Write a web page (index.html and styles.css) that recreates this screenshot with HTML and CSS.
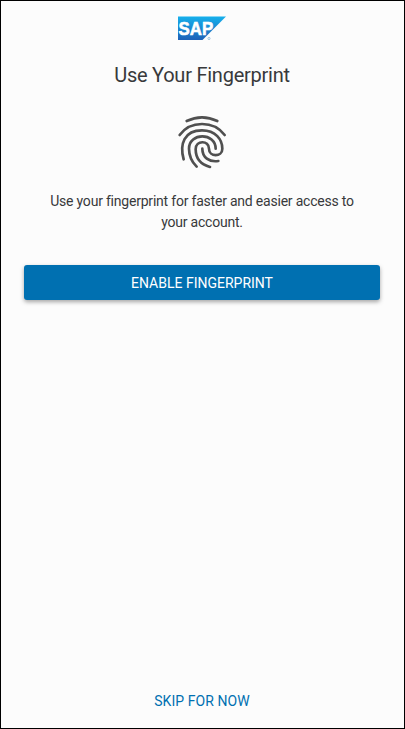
FILE: index.html
```html
<!DOCTYPE html>
<html lang="en">
<head>
<meta charset="utf-8">
<title>Use Your Fingerprint</title>
<link rel="stylesheet" href="styles.css">
</head>
<body>
<main class="screen">
  <svg class="logo" viewBox="0 0 48 24" role="img" aria-label="SAP">
    <defs><linearGradient id="brand" x1="0" y1="0" x2="0" y2="1"><stop offset="0" stop-color="#16b0ec"/><stop offset="1" stop-color="#1d61b8"/></linearGradient></defs>
    <path d="M0 .5H48L24.5 24H0Z" fill="url(#brand)"/>
    <text class="logo-text" x=".6" y="18.5" textLength="34.5" lengthAdjust="spacingAndGlyphs">SAP</text>
    <circle cx="31" cy="22.5" r="1.1" fill="none" stroke="#6da5cf" stroke-width=".6"/>
  </svg>
  <h1 class="title">Use Your Fingerprint</h1>
  <svg class="fingerprint" viewBox="0 0 192 204" aria-hidden="true">
    <path d="M50 39Q96 17 142 39"/>
    <path d="M29 81C61 37 131 37 164 81"/>
    <path d="M41 154C28 108 43 67 96 67C137 67 157 95 157 122C157 148 117 148 117 122C117 96 77 96 77 124C77 153 94 170 120 177"/>
    <path d="M80 176C63 159 57 142 57 122C57 73 137 73 137 122"/>
    <path d="M97 122C97 148 117 163 145 159"/>
  </svg>
  <p class="message">Use your fingerprint for faster and easier access to<br>your account.</p>
  <button class="primary" type="button">ENABLE FINGERPRINT</button>
  <button class="skip" type="button">SKIP FOR NOW</button>
</main>
</body>
</html>
```
FILE: styles.css
```css
* { box-sizing: border-box; }
body { margin: 0; font-family: Roboto, "Liberation Sans", sans-serif; color: #38393b; }
.screen {
  height: 729px;
  border: 1px solid #000;
  background: #fcfcfc;
  padding: 15px 24px 15px 23px;
  display: flex;
  flex-direction: column;
  align-items: center;
}
.logo { width: 48px; height: 24px; flex: none; }
.logo-text { font: bold 18.5px "Liberation Sans", sans-serif; fill: #fff; stroke: #fff; stroke-width: .6px; }
.title { margin: 21px 0 0; font-size: 20px; line-height: 28px; font-weight: 400; letter-spacing: -.24px; white-space: nowrap; }
.fingerprint { width: 64px; height: 68px; margin-top: 19px; flex: none; fill: none; stroke: #505050; stroke-width: 8; stroke-linecap: round; }
.message { margin: 15px 0 0; font-size: 14px; line-height: 21px; letter-spacing: -.21px; text-align: center; white-space: nowrap; }
button { font: 14px/20px Roboto, "Liberation Sans", sans-serif; border: 0; padding: 0; white-space: nowrap; }
.primary {
  width: 100%;
  height: 35px;
  margin-top: 32px;
  flex: none;
  border-radius: 3px;
  background: #0070b1;
  color: #fff;
  box-shadow: 0 2px 4px rgba(0, 0, 0, .35);
}
.skip { margin-top: auto; height: 24px; background: transparent; color: #0070b1; letter-spacing: .08px; }
```
